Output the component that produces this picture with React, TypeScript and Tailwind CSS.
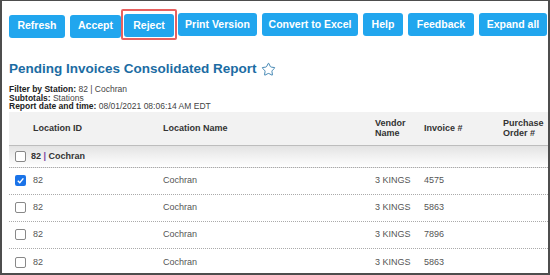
import { Star } from "lucide-react";

const buttons = [
  { label: "Refresh", w: "w-[56px]" },
  { label: "Accept", w: "w-[51px]" },
];
const buttons2 = [
  { label: "Print Version", w: "w-[79px]" },
  { label: "Convert to Excel", w: "w-[96px]" },
  { label: "Help", w: "w-[40px]" },
  { label: "Feedback", w: "w-[66px]" },
  { label: "Expand all", w: "w-[68px]" },
];

const rows = [
  { checked: true, invoice: "4575" },
  { checked: false, invoice: "5863" },
  { checked: false, invoice: "7896" },
  { checked: false, invoice: "5863" },
];

function Btn({ label, w }: { label: string; w: string }) {
  return (
    <button
      className={`${w} h-[23px] shrink-0 rounded-[3px] bg-[#21a6ee] text-white text-[10.5px] font-bold`}
    >
      {label}
    </button>
  );
}

function Checkbox({ checked }: { checked?: boolean }) {
  if (checked) {
    return (
      <span className="flex h-[11px] w-[11px] items-center justify-center rounded-[2px] bg-[#1a73e8]">
        <svg width="9" height="9" viewBox="0 0 10 10">
          <path d="M2 5.2 L4.2 7.4 L8.2 2.6" fill="none" stroke="white" strokeWidth="1.6" />
        </svg>
      </span>
    );
  }
  return <span className="block h-[11px] w-[11px] rounded-[2px] border border-[#888] bg-white" />;
}

export default function App() {
  return (
    <div className="h-[275px] w-[550px] overflow-hidden border-x-2 border-b-2 border-t border-[#4d4d4d] bg-white pl-[7px] font-['Liberation_Sans',Arial,sans-serif]">
      <div className="flex items-center pt-[8px]">
        <div className="flex gap-[5px] pt-[3px]">
          {buttons.map((b) => (
            <Btn key={b.label} {...b} />
          ))}
        </div>
        <div className="rounded-[2px] border-2 border-[#e8605f] p-px">
          <Btn label="Reject" w="w-[50px]" />
        </div>
        <div className="ml-px flex gap-[5px]">
          {buttons2.map((b) => (
            <Btn key={b.label} {...b} />
          ))}
        </div>
      </div>

      <h1 className="mt-[21px] flex items-center gap-[4px] text-[13.5px] font-bold leading-[16px] text-[#1b6ca3]">
        Pending Invoices Consolidated Report
        <Star size={15} strokeWidth={1.3} className="text-[#1b6ca3]" />
      </h1>

      <div className="mt-[8px] text-[8.5px] leading-[8.5px] text-[#444]">
        <p>
          <b className="text-[#222]">Filter by Station:</b> 82 | Cochran
        </p>
        <p>
          <b className="text-[#222]">Subtotals:</b> Stations
        </p>
        <p>
          <b className="text-[#222]">Report date and time:</b> 08/01/2021 08:06:14 AM EDT
        </p>
      </div>

      <div className="mt-[1px] text-[9px]">
        <div className="flex h-[34px] items-center border-b border-[#bdbdbd] bg-[#f2f2f2] font-bold text-[#333] leading-[10px]">
          <div className="w-[24px] shrink-0" />
          <div className="w-[130px] shrink-0">Location ID</div>
          <div className="w-[212px] shrink-0">Location Name</div>
          <div className="w-[49px] shrink-0">
            Vendor
            <br />
            Name
          </div>
          <div className="w-[79px] shrink-0">Invoice #</div>
          <div className="w-[60px] shrink-0">
            Purchase
            <br />
            Order #
          </div>
        </div>

        <div className="flex h-[22px] items-center border-b border-dotted border-[#aaa] bg-gradient-to-b from-[#e3e3e3] to-white font-bold text-[#333]">
          <div className="w-[22px] shrink-0 pl-[6px]">
            <Checkbox />
          </div>
          <span>
            82 <span className="text-[#7b3f9e]">|</span> Cochran
          </span>
        </div>

        {rows.map((r, i) => (
          <div
            key={i}
            className={`flex h-[27px] items-center text-[#555] ${i < rows.length - 1 ? "border-b border-dotted border-[#aaa]" : ""}`}
          >
            <div className="w-[24px] shrink-0 pl-[6px]">
              <Checkbox checked={r.checked} />
            </div>
            <div className="w-[130px] shrink-0">82</div>
            <div className="w-[212px] shrink-0">Cochran</div>
            <div className="w-[49px] shrink-0">3 KINGS</div>
            <div className="w-[79px] shrink-0">{r.invoice}</div>
          </div>
        ))}
      </div>
    </div>
  );
}
